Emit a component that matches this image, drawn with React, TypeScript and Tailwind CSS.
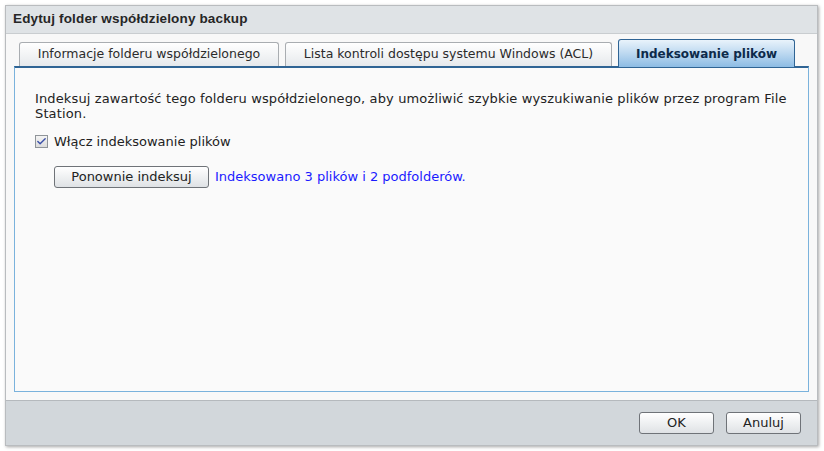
import { Check } from 'lucide-react';

const font = "font-['DejaVu_Sans','Liberation_Sans',sans-serif]";

function Tab({ label, active, className }: { label: string; active?: boolean; className?: string }) {
  if (active) {
    return (
      <div
        className={`relative -mb-px flex h-[28px] items-center justify-center whitespace-nowrap rounded-t-[3px] border border-b-0 border-[#2f6494] bg-gradient-to-b from-[#e9f3fb] via-[#bcd8f0] to-[#8dbce4] text-[12px] font-bold text-[#0d2a4a] ${className ?? ''}`}
      >
        {label}
      </div>
    );
  }
  return (
    <div
      className={`flex h-[24px] items-center justify-center whitespace-nowrap rounded-t-[3px] border border-b-0 border-[#a9adb1] bg-gradient-to-b from-[#ffffff] to-[#e6e9ec] text-[12.5px] text-[#2b2b2b] ${className ?? ''}`}
    >
      {label}
    </div>
  );
}

function Button({ label, className }: { label: string; className?: string }) {
  return (
    <button
      className={`flex h-[22px] items-center justify-center rounded-[3px] border border-[#6f7378] bg-gradient-to-b from-[#ffffff] to-[#dfe2e5] text-[13px] text-[#222] ${className ?? ''}`}
    >
      {label}
    </button>
  );
}

export default function App() {
  return (
    <div className={`h-[451px] w-[824px] bg-white pl-[5px] pt-[5px] pr-[6px] ${font}`}>
      <div className="flex h-[441px] flex-col border border-[#b9bcbf] bg-[#f8f8f8] shadow-[1px_1px_3px_rgba(0,0,0,0.35)]">
        <div className="flex h-[28px] items-center border-b border-[#c9cdd0] bg-[#dfe3e6] pl-[7px] font-['Liberation_Sans',sans-serif] text-[13.5px] font-bold tracking-[0.15px] text-[#262626]">
          Edytuj folder współdzielony backup
        </div>
        <div className="flex flex-1 flex-col px-[8px] pt-[5px]">
          <div className="flex items-end pl-[5px]">
            <Tab label="Informacje folderu współdzielonego" className="w-[260px]" />
            <Tab label="Lista kontroli dostępu systemu Windows (ACL)" className="ml-[6px] w-[327px]" />
            <Tab label="Indeksowanie plików" active className="ml-[6px] w-[177px]" />
          </div>
          <div className="flex h-[326px] flex-col border border-t-2 border-[#7ab2dc] border-t-[#2f6494] bg-[#fafafa] px-[20px] pt-[23px] text-[13px] text-[#222]">
            <p className="leading-[15px] tracking-[0.13px]">
              Indeksuj zawartość tego folderu współdzielonego, aby umożliwić szybkie wyszukiwanie plików przez program File Station.
            </p>
            <label className="mt-[11px] flex items-center gap-[6px]">
              <span className="flex h-[13px] w-[13px] items-center justify-center border border-[#8f9499] bg-gradient-to-b from-[#f4f4f4] to-[#dcdcdc]">
                <Check className="h-[11px] w-[11px] text-[#3a4fa8]" strokeWidth={3} />
              </span>
              Włącz indeksowanie plików
            </label>
            <div className="mt-[14px] flex items-center gap-[6px] pl-[19px]">
              <Button label="Ponownie indeksuj" className="w-[155px]" />
              <span className="text-[#1a1aff]">Indeksowano 3 plików i 2 podfolderów.</span>
            </div>
          </div>
        </div>
        <div className="mt-[8px] flex h-[45px] items-center justify-end gap-[12px] border-t border-[#b5b9bd] bg-[#d2d7db] pr-[16px]">
          <Button label="OK" className="w-[75px]" />
          <Button label="Anuluj" className="w-[75px]" />
        </div>
      </div>
    </div>
  );
}
